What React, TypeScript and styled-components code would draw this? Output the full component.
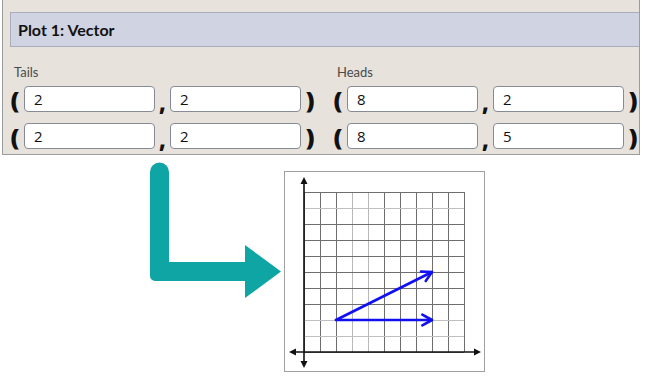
import React from 'react';
import styled, { createGlobalStyle } from 'styled-components';

const GlobalStyle = createGlobalStyle`
  body {
    margin: 0;
    background: #fff;
    font-family: Lato, "Open Sans", sans-serif;
  }
`;

interface IPair {
  x: string;
  y: string;
}

const tails: IPair[] = [
  { x: '2', y: '2' },
  { x: '2', y: '2' },
];

const heads: IPair[] = [
  { x: '8', y: '2' },
  { x: '8', y: '5' },
];

const CELL = 16;
const OX = 20;
const OY = 181;

const toPx = (gx: number, gy: number) => [OX + gx * CELL, OY - gy * CELL];

// lines that render lighter in the original plot
const lightRows = [1, 8, 9];
const lightCols = [3, 4];

const Coord: React.FC<{ pair: IPair }> = ({ pair }) => (
  <Row>
    <Paren>(</Paren>
    <Field readOnly value={pair.x} />
    <Comma>,</Comma>
    <Field readOnly value={pair.y} />
    <Paren>)</Paren>
  </Row>
);

const VectorArrow: React.FC<{ from: number[]; to: number[] }> = ({ from, to }) => {
  const [x1, y1] = toPx(from[0], from[1]);
  const [x2, y2] = toPx(to[0], to[1]);
  const ang = Math.atan2(y2 - y1, x2 - x1);
  const len = 11;
  const spread = 0.5;
  const a1 = [x2 - len * Math.cos(ang - spread), y2 - len * Math.sin(ang - spread)];
  const a2 = [x2 - len * Math.cos(ang + spread), y2 - len * Math.sin(ang + spread)];
  return (
    <g stroke="#1010f0" strokeWidth={2.6} strokeLinecap="round" fill="none">
      <line x1={x1} y1={y1} x2={x2} y2={y2} />
      <polyline points={`${a1[0]},${a1[1]} ${x2},${y2} ${a2[0]},${a2[1]}`} strokeLinejoin="round" />
    </g>
  );
};

const App: React.FC = () => {
  return (
    <>
      <GlobalStyle />
      <Panel>
        <TitleBar>Plot 1: Vector</TitleBar>
        <Groups>
          <Group>
            <Label>Tails</Label>
            {tails.map((p, i) => <Coord key={i} pair={p} />)}
          </Group>
          <Group>
            <Label>Heads</Label>
            {heads.map((p, i) => <Coord key={i} pair={p} />)}
          </Group>
        </Groups>
      </Panel>
      <Output>
        <svg width={145} height={140} viewBox="0 0 145 140">
          <path
            d="M10,12 a9.5,9.5 0 0 1 19,0 V102 H105 V85 L141,111.5 L105,138 V121 H15 a5,5 0 0 1 -5,-5 Z"
            fill="#10a5a5"
          />
        </svg>
        <GraphBox>
          <svg width={199} height={199} viewBox="1 1 199 199">
            <g shapeRendering="crispEdges">
              {Array.from({ length: 11 }).map((_, i) => (
                <line
                  key={'v' + i}
                  x1={OX + i * CELL + 0.5}
                  y1={OY - 10 * CELL}
                  x2={OX + i * CELL + 0.5}
                  y2={OY}
                  stroke={lightCols.includes(i) ? '#b8b8b8' : '#6e6e6e'}
                  strokeWidth={1}
                />
              ))}
              {Array.from({ length: 11 }).map((_, j) => (
                <line
                  key={'h' + j}
                  x1={OX}
                  y1={OY - (10 - j) * CELL + 0.5}
                  x2={OX + 10 * CELL}
                  y2={OY - (10 - j) * CELL + 0.5}
                  stroke={lightRows.includes(j) ? '#c0c0c0' : '#6e6e6e'}
                  strokeWidth={1}
                />
              ))}
            </g>
            <g stroke="#111" strokeWidth={1.6}>
              <line x1={OX} y1={10} x2={OX} y2={193} />
              <line x1={9} y1={OY} x2={193} y2={OY} />
            </g>
            <g fill="#111">
              <polygon points={`${OX},6 ${OX - 3.5},13 ${OX + 3.5},13`} />
              <polygon points={`${OX},197 ${OX - 3.5},190 ${OX + 3.5},190`} />
              <polygon points={`5,${OY} 12,${OY - 3.5} 12,${OY + 3.5}`} />
              <polygon points={`197,${OY} 190,${OY - 3.5} 190,${OY + 3.5}`} />
            </g>
            <VectorArrow from={[2, 2]} to={[8, 2]} />
            <VectorArrow from={[2, 2]} to={[8, 5]} />
          </svg>
        </GraphBox>
      </Output>
    </>
  );
};

export default App;

const Panel = styled.div`
  margin-left: 2px;
  width: 638px;
  height: 155px;
  box-sizing: border-box;
  background: #e7e2db;
  border: 1px solid #9c9c9c;
  border-top: none;
  padding-top: 12px;
`;

const TitleBar = styled.div`
  margin-left: 7px;
  height: 35px;
  box-sizing: border-box;
  background: #d0d3e1;
  border: 1px solid #a9acb9;
  border-right: none;
  padding-left: 7px;
  display: flex;
  align-items: center;
  font-size: 16px;
  font-weight: 700;
  color: #111;
`;

const Groups = styled.div`
  display: flex;
  gap: 10px;
  padding-left: 3px;
  margin-top: 17px;
`;

const Group = styled.div`
  display: flex;
  flex-direction: column;
`;

const Label = styled.div`
  font-size: 13px;
  line-height: 16px;
  color: #4a4a4a;
  padding-left: 8px;
  margin-bottom: 6px;
`;

const Row = styled.div`
  display: flex;
  align-items: center;
  height: 26px;
  margin-bottom: 11px;
`;

const Paren = styled.span`
  width: 18px;
  text-align: center;
  font-family: "Open Sans", sans-serif;
  font-size: 23px;
  font-weight: 800;
  line-height: 26px;
  color: #111;
  transform: scaleX(1.1);
`;

const Comma = styled.span`
  width: 15px;
  text-align: center;
  align-self: flex-end;
  font-family: "Open Sans", sans-serif;
  font-size: 22px;
  font-weight: 800;
  line-height: 26px;
  color: #111;
  transform: translateY(3px);
`;

const Field = styled.input`
  width: 131px;
  height: 26px;
  box-sizing: border-box;
  border: 1px solid #868b96;
  border-radius: 4px;
  background: #fff;
  padding: 0 0 0 9px;
  font-family: "Open Sans", sans-serif;
  font-size: 15px;
  color: #111;
  outline: none;
`;

const Output = styled.div`
  display: flex;
  align-items: flex-start;
  padding-left: 140px;
  margin-top: 5px;
`;

const GraphBox = styled.div`
  margin-top: 11px;
  margin-left: -1px;
  width: 201px;
  height: 201px;
  box-sizing: border-box;
  border: 1px solid #a0a0a0;
  background: #fff;
  svg {
    display: block;
  }
`;
